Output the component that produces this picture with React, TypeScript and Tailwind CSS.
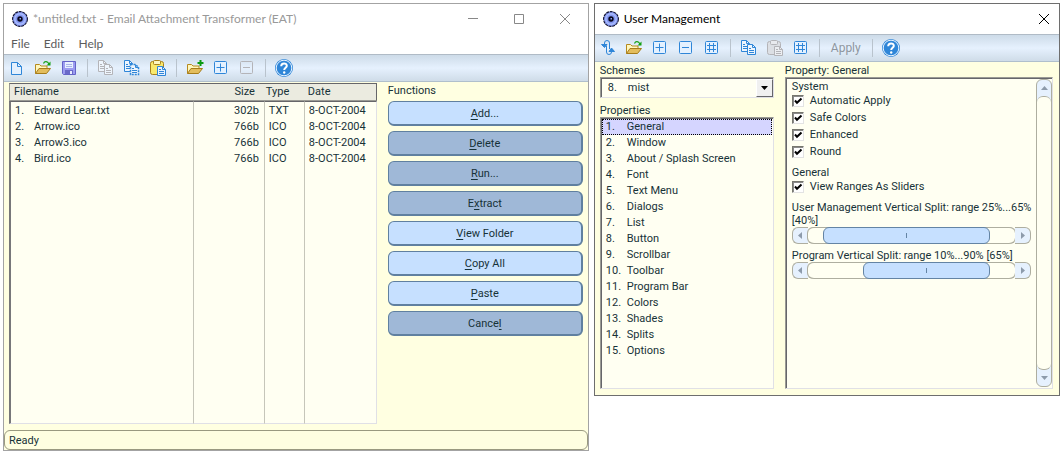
import React, { useState } from 'react';
import clsx from 'clsx';

const files = [
  { name: 'Edward Lear.txt', size: '302b', type: 'TXT', date: '8-OCT-2004' },
  { name: 'Arrow.ico', size: '766b', type: 'ICO', date: '8-OCT-2004' },
  { name: 'Arrow3.ico', size: '766b', type: 'ICO', date: '8-OCT-2004' },
  { name: 'Bird.ico', size: '766b', type: 'ICO', date: '8-OCT-2004' },
];

// [before, mnemonic, after, enabled]
const functions: [string, string, string, boolean][] = [
  ['', 'A', 'dd...', true],
  ['', 'D', 'elete', false],
  ['', 'R', 'un...', false],
  ['E', 'x', 'tract', false],
  ['', 'V', 'iew Folder', true],
  ['', 'C', 'opy All', true],
  ['', 'P', 'aste', true],
  ['Cance', 'l', '', false],
];

const properties = [
  'General', 'Window', 'About / Splash Screen', 'Font', 'Text Menu', 'Dialogs', 'List', 'Button',
  'Scrollbar', 'Toolbar', 'Program Bar', 'Colors', 'Shades', 'Splits', 'Options',
];

const BLUE = '#2f86d8';
const GRAY = '#b4b4b8';

function Icon({ children }: { children: React.ReactNode }) {
  return (
    <svg width="18" height="18" viewBox="0 0 18 18" fill="none" aria-hidden="true">
      {children}
    </svg>
  );
}

function AppIcon() {
  return (
    <svg width="16" height="16" viewBox="0 0 16 16" aria-hidden="true">
      <circle cx="8" cy="8" r="7.4" fill="#8496ee" stroke="#10102c" strokeWidth="1.1" strokeDasharray="3 .7" />
      <circle cx="8" cy="8" r="5.2" fill="none" stroke="#a9bcff" strokeWidth="1.4" />
      <circle cx="8" cy="8" r="2.7" fill="#05051c" />
      <rect x="7.500" y="7" width="1.500" height="1.500" fill="#8fa2f4" />
    </svg>
  );
}

const NewIcon = () => (
  <Icon>
    <path d="M3.500 3.500h6l4 4v8h-10z" fill="#e4f0fd" stroke={BLUE} strokeLinejoin="round" />
    <path d="M9.500 3.500v4h4" stroke={BLUE} />
  </Icon>
);

const Folder = () => (
  <>
    <path d="M1.5 14.5v-9h4l1.5 1.5h6v2.5" fill="#fff7bd" stroke="#b58a20" />
    <path d="M1.5 14.5l3.5-5h11.5l-4 5z" fill="#e3bd5c" stroke="#a67c1a" strokeLinejoin="round" />
  </>
);

const OpenIcon = () => (
  <Icon>
    <Folder />
    <path d="M9.5 4.5c1-2.5 4-2.5 5.500.5" stroke="#12a012" strokeWidth="1.2" />
    <path d="M16.500 2.500v4h-4z" fill="#12a012" />
  </Icon>
);

const FolderAddIcon = () => (
  <Icon>
    <Folder />
    <path d="M14.500 1v6M11.500 4h6" stroke="#0b9a12" strokeWidth="2" />
  </Icon>
);

const SaveIcon = () => (
  <Icon>
    <path d="M2.500 2.500h13v13h-12l-1-1z" fill="#9c9cf0" stroke="#6464c8" strokeLinejoin="round" />
    <rect x="5" y="3" width="8" height="6" fill="#e8f0ff" />
    <path d="M6 5.500h6M6 7.500h6" stroke="#a8b4e8" />
    <rect x="5" y="11" width="8" height="4" fill="#6a6ac8" />
    <rect x="10" y="12" width="2" height="3" fill="#e8ecff" />
  </Icon>
);

const CopyIcon = ({ color, dashed = false }: { color: string; dashed?: boolean }) => (
  <Icon>
    <path d="M1.500 1.500h5l3 3v8h-8z" fill="#eef5fd" stroke={color} />
    <path d="M6.500 1.500v3h3M3 5.500h2M3 7.500h4M3 9.500h4" stroke={color} />
    <path
      d="M7.500 5.500h5l3 3v7h-8z"
      fill="#eef5fd"
      stroke={color}
      strokeWidth={dashed ? 1.5 : 1}
      strokeDasharray={dashed ? '2 1' : undefined}
    />
    <path d="M12.500 5.500v3h3M9 9.500h2M9 11.500h5M9 13.500h5" stroke={color} />
  </Icon>
);

const PasteIcon = ({ disabled = false }: { disabled?: boolean }) => (
  <Icon>
    <rect x="1.500" y="2.500" width="13" height="13" rx="2" fill={disabled ? '#dcdfe4' : '#f9e96c'} stroke={disabled ? GRAY : '#a8801c'} />
    <rect x="4.500" y="1.500" width="7" height="4" rx="1" fill={disabled ? '#e8eaee' : '#fdf7c0'} stroke={disabled ? GRAY : '#a8801c'} />
    <path d="M8.500 7.500h5l3 3v6h-8z" fill={disabled ? '#eceef2' : '#e8f2ff'} stroke={disabled ? GRAY : BLUE} />
    <path d="M13.500 7.500v3h3M10 10.500h2M10 12.500h5M10 14.500h5" stroke={disabled ? GRAY : BLUE} />
  </Icon>
);

const BoxIcon = ({ kind, color = BLUE }: { kind: 'plus' | 'minus' | 'grid'; color?: string }) => (
  <Icon>
    <rect x="2.500" y="2.500" width="12" height="12" rx="1" stroke={color} fill={color === BLUE ? '#e4f1ff' : 'none'} />
    {kind === 'plus' && <path d="M8.500 4.500v8M4.500 8.500h8" stroke={color} />}
    {kind === 'minus' && <path d="M5 8.500h7" stroke={color} />}
    {kind === 'grid' && <path d="M6.500 4v9M10.500 4v9M4 6.500h9M4 10.500h9" stroke={color} />}
  </Icon>
);

// two half loops with an arrow head on each, pointing down and up
const SwapIcon = () => (
  <Icon>
    <path d="M5.500 5V4q0-2.500 2.500-2.500T10.500 4v6M7.500 7v6q0 2.500 2.500 2.500t2.500-2.500v-1" stroke={BLUE} />
    <path d="M2.500 5.500h5.500l-2.500 3zM10 12.500h5.500l-3-3.500z" fill={BLUE} stroke={BLUE} />
  </Icon>
);

const HelpIcon = () => (
  <svg width="20" height="20" viewBox="0 0 20 20" fill="none" aria-hidden="true">
    <circle cx="10" cy="10" r="9" fill="#2f86d8" />
    <circle cx="10" cy="10" r="7.800" stroke="#e8f3ff" strokeWidth="1" />
    <path d="M7.200 8.200c0-3.800 5.800-3.600 5.600-.3-.1 1.700-2.600 2-2.600 4" stroke="#fff" strokeWidth="2" />
    <circle cx="10.200" cy="14.500" r="1.200" fill="#fff" />
  </svg>
);

function Tool({ label, disabled, children }: { label: string; disabled?: boolean; children: React.ReactNode }) {
  return (
    <button type="button" aria-label={label} disabled={disabled} className="flex h-full w-[26px] shrink-0 items-center justify-center">
      {children}
    </button>
  );
}

function Separator() {
  return (
    <div className="flex w-[11px] shrink-0 justify-center">
      <div className="h-[18px] w-px bg-[#b9c3cd]" />
    </div>
  );
}

function Toolbar({ children }: { children: React.ReactNode }) {
  return (
    <div className="flex h-7 items-center border-y border-t-[#b0bbc6] border-b-[#b0bfcc] bg-linear-to-b from-[#cddbe8] via-[#e6f1fe] to-[#cfdce8]">
      {children}
    </div>
  );
}

function Check({ label }: { label: string }) {
  return (
    <label className="flex h-[17px] items-center gap-[6px]">
      <span className="grid">
        <input
          type="checkbox"
          defaultChecked
          className="peer col-start-1 row-start-1 size-3 appearance-none border border-t-[#77776f] border-r-[#e3e3e3] border-b-[#e3e3e3] border-l-[#77776f] bg-white shadow-[inset_1px_1px_0_#8a8a8a]"
        />
        <svg width="12" height="12" viewBox="0 0 12 12" fill="none" className="pointer-events-none invisible col-start-1 row-start-1 peer-checked:visible" aria-hidden="true">
          <path d="M3 5.500l2 2.300L9.500 3.500" stroke="#000" strokeWidth="2" />
        </svg>
      </span>
      {label}
    </label>
  );
}

function RangeSlider({ label, min, max, value, thumb }: { label: string; min: number; max: number; value: number; thumb: string }) {
  const [current, setCurrent] = useState(value);
  return (
    <div className="mr-[5px] flex h-[17px] items-stretch">
      <button
        type="button"
        aria-label={`Decrease ${label}`}
        onClick={() => setCurrent(Math.max(min, current - 1))}
        className="flex w-4 items-center justify-center rounded-l-md border border-r-0 border-[#aeaea0] bg-[#e6f1fe]"
      >
        <svg width="4" height="7" viewBox="0 0 4 7" aria-hidden="true"><path d="M4 0v7L0 3.500z" fill="#8d9bab" /></svg>
      </button>
      <input
        type="range"
        aria-label={label}
        min={min}
        max={max}
        value={current}
        onChange={(e) => setCurrent(Number(e.target.value))}
        className={clsx(
          'h-full min-w-0 flex-1 appearance-none rounded-md border-y border-[#aeaea0] bg-[#fffff2] shadow-[-1px_0_0_#aeaea0,1px_0_0_#aeaea0]',
          '[&::-webkit-slider-thumb]:h-[17px] [&::-webkit-slider-thumb]:appearance-none [&::-webkit-slider-thumb]:rounded-md [&::-webkit-slider-thumb]:border [&::-webkit-slider-thumb]:border-[#6484a4]',
          '[&::-webkit-slider-thumb]:bg-[#c6e0ff] [&::-webkit-slider-thumb]:bg-[linear-gradient(#6484a4,#6484a4)] [&::-webkit-slider-thumb]:bg-[length:1px_5px] [&::-webkit-slider-thumb]:bg-center [&::-webkit-slider-thumb]:bg-no-repeat',
          thumb,
        )}
      />
      <button
        type="button"
        aria-label={`Increase ${label}`}
        onClick={() => setCurrent(Math.min(max, current + 1))}
        className="flex w-4 items-center justify-center rounded-r-md border border-l-0 border-[#aeaea0] bg-[#e6f1fe]"
      >
        <svg width="4" height="7" viewBox="0 0 4 7" aria-hidden="true"><path d="M0 0v7l4-3.500z" fill="#8d9bab" /></svg>
      </button>
    </div>
  );
}

const sunken = 'border border-t-[#9a9a94] border-l-[#9a9a94] border-r-[#e0e0e6] border-b-[#e0e0e6] bg-[#fffff2] shadow-[inset_1px_1px_0_#66666a]';

function MainWindow() {
  return (
    <main className="flex min-w-0 flex-[586] flex-col border border-[#a3a3a3] bg-[#ffffe1]">
      <header className="bg-white font-[Lato,'Open_Sans',sans-serif] text-xs">
        <div className="flex h-[30px] items-center pl-2 text-[#999]">
          <AppIcon />
          <h1 className="ml-[5px] flex-1 truncate">*untitled.txt - Email Attachment Transformer (EAT)</h1>
          <button type="button" aria-label="Minimize" className="flex h-full w-[46px] items-center justify-center">
            <svg width="10" height="10" viewBox="0 0 10 10" fill="none"><path d="M0 4.500h10" stroke="#888" /></svg>
          </button>
          <button type="button" aria-label="Maximize" className="flex h-full w-[46px] items-center justify-center">
            <svg width="10" height="10" viewBox="0 0 10 10" fill="none"><path d="M.5.500h9v9h-9z" stroke="#888" /></svg>
          </button>
          <button type="button" aria-label="Close" className="flex h-full w-[46px] items-center justify-center">
            <svg width="10" height="10" viewBox="0 0 10 10" fill="none"><path d="M0 0l10 10M10 0L0 10" stroke="#888" /></svg>
          </button>
        </div>
        <nav className="flex h-5 items-center gap-[14px] pl-[7px] text-[#5c5c5c]">
          <button type="button">File</button>
          <button type="button">Edit</button>
          <button type="button">Help</button>
        </nav>
      </header>
      <Toolbar>
        <Tool label="New"><NewIcon /></Tool>
        <Tool label="Open"><OpenIcon /></Tool>
        <Tool label="Save"><SaveIcon /></Tool>
        <Separator />
        <Tool label="Copy" disabled><CopyIcon color={GRAY} /></Tool>
        <Tool label="Copy all"><CopyIcon color={BLUE} dashed /></Tool>
        <Tool label="Paste"><PasteIcon /></Tool>
        <Separator />
        <Tool label="Add folder"><FolderAddIcon /></Tool>
        <Tool label="Add"><BoxIcon kind="plus" /></Tool>
        <Tool label="Remove" disabled><BoxIcon kind="minus" color={GRAY} /></Tool>
        <Separator />
        <Tool label="Help"><HelpIcon /></Tool>
      </Toolbar>

      <div className="flex flex-1 gap-[11px] px-[5px] pt-px pb-[6px]">
        <div className="flex min-w-0 flex-[368]">
          <table className="w-full table-fixed border-separate border-spacing-0">
            <colgroup>
              <col />
              <col className="w-[71px]" />
              <col className="w-10" />
              <col className="w-[72px]" />
            </colgroup>
            <thead className="bg-[#ebebe0] text-left">
              <tr className="h-[18px] [&>th]:border-t [&>th]:border-b [&>th]:border-t-[#66666a] [&>th]:border-b-[#9a9a94] [&>th]:p-0 [&>th]:font-normal">
                <th className="border-l border-l-[#9a9a94]"><span className="pl-1">Filename</span></th>
                <th className="text-right"><span className="pr-[10px]">Size</span></th>
                <th><span className="pl-px">Type</span></th>
                <th className="border-r border-r-[#66666a]"><span className="pl-[3px]">Date</span></th>
              </tr>
            </thead>
            <tbody className="bg-[#fffff2] [&_td]:border-r [&_td]:border-r-[#c6c6ba] [&_td]:p-0 [&_td:first-child]:border-l-2 [&_td:first-child]:border-l-[#77777a] [&_td:last-child]:border-r-[#e0e0e6]">
              <tr className="h-0.5 [&>td]:border-t [&>td]:border-t-[#66666a]">
                <td /><td /><td /><td />
              </tr>
              {files.map((file, i) => (
                <tr key={file.name} className="h-4">
                  <td><span className="ml-1 inline-block w-[19px]">{i + 1}.</span>{file.name}</td>
                  <td className="text-right"><span className="pr-[5px]">{file.size}</span></td>
                  <td><span className="pl-1">{file.type}</span></td>
                  <td><span className="pl-1">{file.date}</span></td>
                </tr>
              ))}
              <tr className="h-[257px] [&>td]:border-b [&>td]:border-b-[#e0e0e6]">
                <td /><td /><td /><td />
              </tr>
            </tbody>
          </table>
        </div>
        <section className="flex min-w-0 flex-[195] flex-col">
          <h2 className="h-[18px] leading-[15px]">Functions</h2>
          <div className="flex flex-col gap-[5px]">
            {functions.map(([before, key, after, enabled]) => (
              <button
                key={before + key + after}
                type="button"
                disabled={!enabled}
                className={clsx(
                  'h-[25px] rounded-md border border-r-2 border-b-2 border-[#6080a0] pt-0.5',
                  enabled ? 'bg-[#c6e0ff]' : 'bg-[#9fb8d7]',
                )}
              >
                {before}<u className="underline-offset-2">{key}</u>{after}
              </button>
            ))}
          </div>
        </section>
      </div>
      <footer className="h-5 rounded-md border border-[#9a9a80] px-1 leading-5">Ready</footer>
    </main>
  );
}

function UserManagement() {
  const [selected, setSelected] = useState(0);
  return (
    <aside className="flex min-w-0 flex-[466] flex-col border border-[#6e6e6e] bg-[#ffffe1]">
      <header className="flex h-[30px] items-center bg-white pl-2 font-[Lato,'Open_Sans',sans-serif] text-xs text-black">
        <AppIcon />
        <h1 className="ml-[5px] flex-1 truncate">User Management</h1>
        <button type="button" aria-label="Close" className="flex h-full w-[30px] items-center justify-center">
          <svg width="10" height="10" viewBox="0 0 10 10" fill="none"><path d="M0 0l10 10M10 0L0 10" stroke="#000" /></svg>
        </button>
      </header>
      <Toolbar>
        <Tool label="Swap"><SwapIcon /></Tool>
        <Tool label="Open"><OpenIcon /></Tool>
        <Tool label="Add"><BoxIcon kind="plus" /></Tool>
        <Tool label="Remove"><BoxIcon kind="minus" /></Tool>
        <Tool label="Rename"><BoxIcon kind="grid" /></Tool>
        <Separator />
        <Tool label="Copy"><CopyIcon color={BLUE} /></Tool>
        <Tool label="Paste" disabled><PasteIcon disabled /></Tool>
        <Tool label="Defaults"><BoxIcon kind="grid" /></Tool>
        <Separator />
        <button type="button" disabled className="w-[42px] text-xs text-[#8e969e]">Apply</button>
        <Separator />
        <Tool label="Help"><HelpIcon /></Tool>
      </Toolbar>

      <div className="flex gap-[11px] pt-px pr-[6px] pb-[6px] pl-[5px]">
        <div className="flex min-w-0 flex-[174] flex-col">
          <label htmlFor="scheme" className="h-[14px] leading-[15px]">Schemes</label>
          <div className="grid">
            <select id="scheme" className={clsx('col-start-1 row-start-1 h-[21px] w-full appearance-none rounded-none pr-5 pl-[7px]', sunken)}>
              <option>8.{'\u00a0\u00a0\u00a0\u00a0'}mist</option>
            </select>
            <span className="pointer-events-none col-start-1 row-start-1 mr-px flex h-[18px] w-[17px] items-center justify-center self-center justify-self-end border border-t-white border-r-[#66666a] border-b-[#66666a] border-l-white bg-[#f0f0f0]">
              <svg width="7" height="4" viewBox="0 0 7 4" aria-hidden="true"><path d="M0 0h7L3.500 4z" fill="#000" /></svg>
            </span>
          </div>
          <h2 className="mt-[5px] h-[14px] leading-[15px]">Properties</h2>
          <ul className={clsx('flex-1 p-px', sunken)}>
            {properties.map((name, i) => (
              <li key={name}>
                <button
                  type="button"
                  onClick={() => setSelected(i)}
                  className={clsx(
                    'flex h-4 w-full items-center border pl-[3px]',
                    selected === i ? 'border-dotted border-black bg-[#d5d5ff]' : 'border-transparent',
                  )}
                >
                  <span className="w-[21px] text-left">{i + 1}.</span>
                  {name}
                </button>
              </li>
            ))}
          </ul>
        </div>

        <div className="flex min-w-0 flex-[268] flex-col">
          <h2 className="h-[14px] leading-[15px]">Property: General</h2>
          <div className={clsx('flex flex-1 py-px pl-px', sunken)}>
            <div className="min-w-0 flex-1 pl-[5px]">
              <h3 className="h-[13px] leading-4">System</h3>
              <Check label="Automatic Apply" />
              <Check label="Safe Colors" />
              <Check label="Enhanced" />
              <Check label="Round" />
              <h3 className="mt-[5px] h-[13px] leading-4">General</h3>
              <Check label="View Ranges As Sliders" />
              <p className="mt-[6px] leading-[13px]">User Management Vertical Split: range 25%...65% [40%]</p>
              <RangeSlider label="User Management Vertical Split" min={25} max={65} value={40} thumb="[&::-webkit-slider-thumb]:w-[167px]" />
              <p className="mt-[5px] leading-[13px]">Program Vertical Split: range 10%...90% [65%]</p>
              <RangeSlider label="Program Vertical Split" min={10} max={90} value={65} thumb="[&::-webkit-slider-thumb]:w-[127px]" />
            </div>
            <div className="flex min-h-[308px] w-4 flex-col rounded-md border border-[#aeaea0] bg-[#e6f1fe]">
              <button type="button" aria-label="Scroll up" className="flex h-4 items-center justify-center">
                <svg width="7" height="4" viewBox="0 0 7 4" aria-hidden="true"><path d="M0 4h7L3.500 0z" fill="#8d9bab" /></svg>
              </button>
              <div className="flex-1 rounded-md border-y border-[#aeaea0] bg-[#fffff2]" />
              <button type="button" aria-label="Scroll down" className="flex h-4 items-center justify-center">
                <svg width="7" height="4" viewBox="0 0 7 4" aria-hidden="true"><path d="M0 0h7L3.500 4z" fill="#8d9bab" /></svg>
              </button>
            </div>
          </div>
        </div>
      </div>
    </aside>
  );
}

export default function App() {
  return (
    <div className="flex min-h-screen items-start gap-[5px] bg-white pt-[3px] pr-1 pb-0.5 pl-[3px] font-[Roboto,'Liberation_Sans',sans-serif] text-[11px] leading-4 text-[#173238]">
      <MainWindow />
      <UserManagement />
    </div>
  );
}
